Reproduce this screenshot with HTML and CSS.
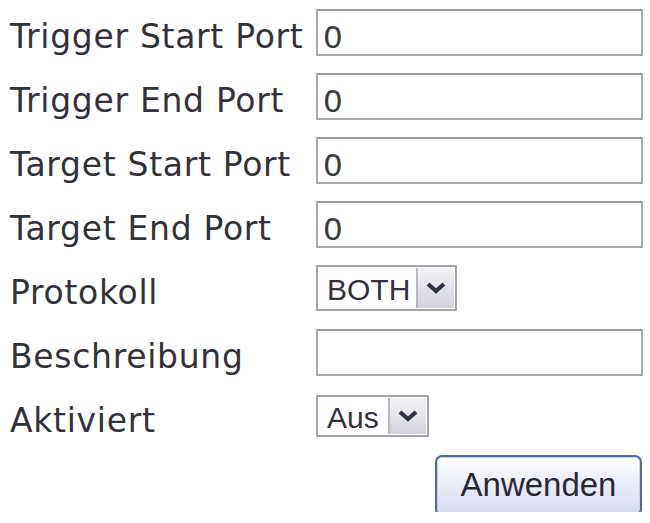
FILE: index.html
```html
<!DOCTYPE html>
<html lang="de">
<head>
<meta charset="utf-8">
<title>Port Triggering</title>
<link rel="stylesheet" href="styles.css">
</head>
<body>
<form class="form">
  <label class="label" for="tsp">Trigger Start Port</label>
  <input class="field" id="tsp" type="text" value="0">

  <label class="label" for="tep">Trigger End Port</label>
  <input class="field" id="tep" type="text" value="0">

  <label class="label" for="gsp">Target Start Port</label>
  <input class="field" id="gsp" type="text" value="0">

  <label class="label" for="gep">Target End Port</label>
  <input class="field" id="gep" type="text" value="0">

  <label class="label" for="proto">Protokoll</label>
  <div class="select select-proto">
    <select id="proto"><option>BOTH</option><option>TCP</option><option>UDP</option></select>
    <span class="arrow"><svg width="22" height="14" viewBox="0 0 22 14"><path d="M3 3 L11 10 L19 3" fill="none" stroke="#2f3140" stroke-width="4"/></svg></span>
  </div>

  <label class="label" for="desc">Beschreibung</label>
  <input class="field" id="desc" type="text" value="">

  <label class="label" for="act">Aktiviert</label>
  <div class="select select-act">
    <select id="act"><option>Aus</option><option>Ein</option></select>
    <span class="arrow"><svg width="22" height="14" viewBox="0 0 22 14"><path d="M3 3 L11 10 L19 3" fill="none" stroke="#2f3140" stroke-width="4"/></svg></span>
  </div>

  <span class="spacer"></span>
  <button class="apply" type="button">Anwenden</button>
</form>
</body>
</html>
```
FILE: styles.css
```css
html, body {
  margin: 0;
  padding: 0;
  background: #ffffff;
}

.form {
  display: grid;
  grid-template-columns: 306px 327px;
  grid-auto-rows: 64px;
  align-items: center;
  padding-left: 10px;
  font-family: "DejaVu Sans", Verdana, sans-serif;
}

.label {
  font-size: 33px;
  letter-spacing: 0.7px;
  color: #33323a;
  padding-top: 8px;
  white-space: nowrap;
}

.field {
  box-sizing: border-box;
  width: 327px;
  height: 47px;
  margin: 0;
  border: 2px solid #a9a9ab;
  border-top-color: #9c9c9e;
  background: #fff;
  padding: 10px 5px 0;
  font-family: "DejaVu Sans", Verdana, sans-serif;
  font-size: 31px;
  color: #3a3a40;
  outline: none;
}

.select {
  display: inline-flex;
  align-items: stretch;
  box-sizing: border-box;
  border: 2px solid #a4a4a8;
  background: #fff;
  justify-self: start;
}

.select-proto {
  width: 141px;
  height: 46px;
}

.select-act {
  width: 113px;
  height: 42px;
}

.select select {
  appearance: none;
  -webkit-appearance: none;
  flex: 1;
  min-width: 0;
  border: none;
  background: transparent;
  margin: 0;
  padding: 2px 0 0 9px;
  font-family: "Liberation Sans", Arial, sans-serif;
  font-size: 30px;
  color: #35303c;
  outline: none;
}

.arrow {
  flex: 0 0 36px;
  display: flex;
  align-items: center;
  justify-content: center;
  border-left: 2px solid #b8b8c0;
  background: linear-gradient(#f2f2f6, #d3d3dc);
  margin: 1px;
}

.spacer {
  display: block;
}

.apply {
  justify-self: end;
  margin-top: 10px;
  width: 207px;
  height: 61px;
  box-sizing: border-box;
  border: 2px solid #4f6b9c;
  border-radius: 7px;
  background: linear-gradient(#ffffff 0%, #eceef8 45%, #d6d9ef 100%);
  box-shadow: inset 0 0 0 1px #c9d3ec;
  font-family: "Liberation Sans", Arial, sans-serif;
  font-size: 33px;
  color: #2a2838;
  padding: 0;
  margin-right: 1px;
}
```
